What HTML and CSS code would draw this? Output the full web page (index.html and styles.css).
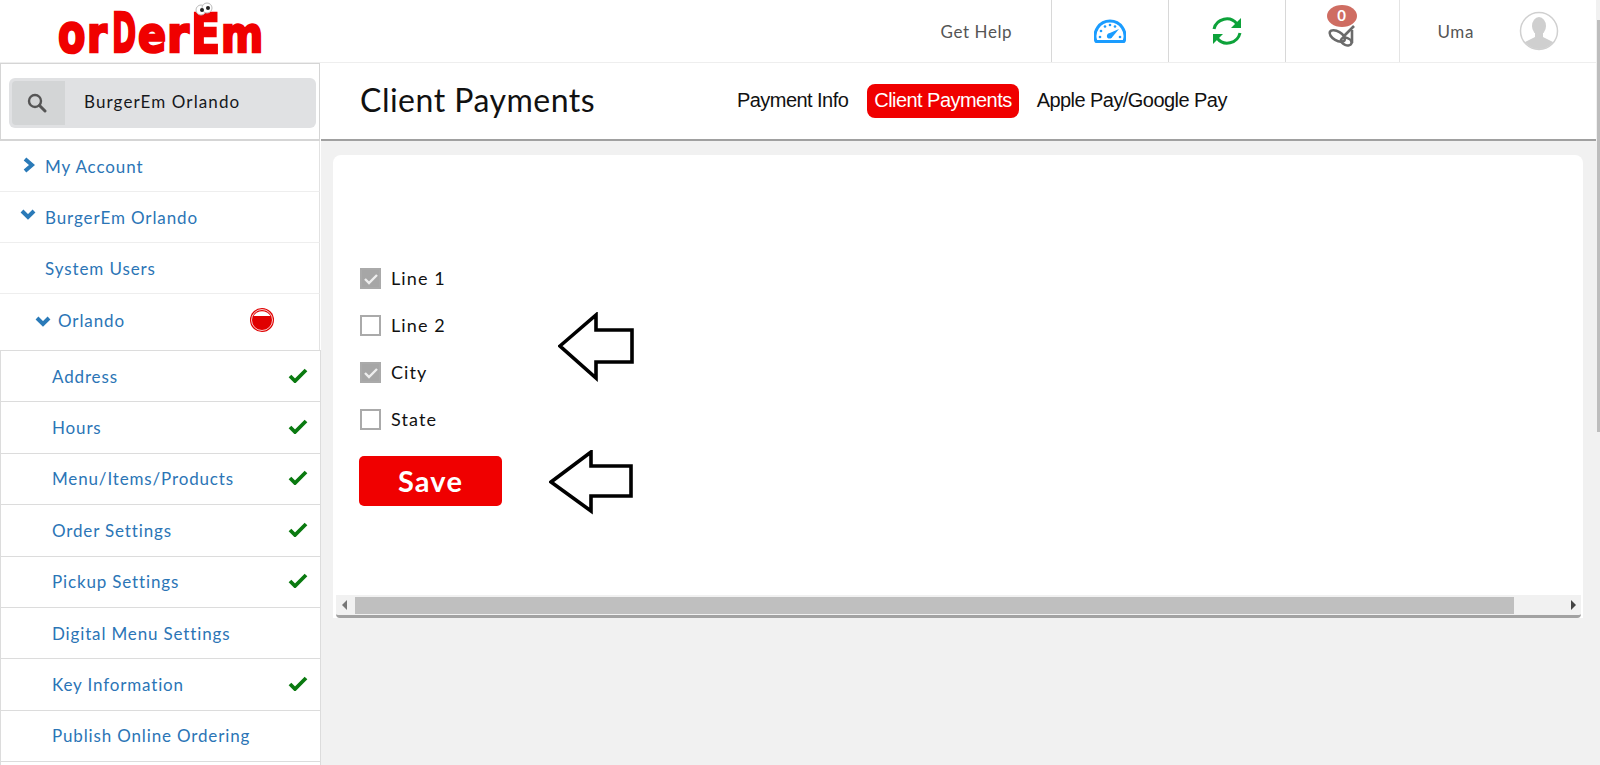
FILE: index.html
```html
<!DOCTYPE html>
<html lang="en">
<head>
    <meta charset="UTF-8">
    <title>Client Payments</title>
    <meta name="viewport" content="width=device-width, initial-scale=1.0">
    <link rel="stylesheet" href="styles.css">
</head>
<body>
    <div class="topbar">
        <div class="logo">
            <svg class="logo-svg" width="240" height="70" viewBox="0 0 240 70">
                <text class="logo-letter" transform="translate(17 52) scale(.74 1)" font-size="54">o</text>
                <text class="logo-letter" transform="translate(46 52) scale(.81 1)" font-size="50">r</text>
                <text class="logo-letter" transform="translate(71 52) scale(.53 1)" font-size="55">D</text>
                <text class="logo-letter" transform="translate(97 52) scale(.83 1)" font-size="50">e</text>
                <text class="logo-letter" transform="translate(126 52) scale(.89 1)" font-size="50">r</text>
                <text class="logo-letter" transform="translate(150 53) scale(.76 1)" font-size="56">E</text>
                <text class="logo-letter" transform="translate(180 52) scale(.81 1)" font-size="50">m</text>
                <circle cx="160" cy="10" r="5" fill="#fff" stroke="#bbb"/>
                <circle cx="166" cy="8" r="5" fill="#fff" stroke="#bbb"/>
                <circle cx="161" cy="10" r="2" fill="#222"/>
                <circle cx="167" cy="8" r="2" fill="#222"/>
            </svg>
        </div>
        <div class="top-right">
            <a class="top-link">Get Help</a>
            <div class="top-cell">
                <svg width="32" height="26" viewBox="0 0 32 26">
                    <path d="M2 23.5 A15 15 0 1 1 30 23.5 Z" fill="none" stroke="#1a9cff" stroke-width="3" stroke-linejoin="round"/>
                    <path d="M13.5 16 L25 11 L17.5 20 Z" fill="#1a9cff"/>
                    <circle cx="15.5" cy="18" r="2.6" fill="#1a9cff"/>
                    <g fill="#1a9cff">
                        <circle cx="6" cy="19" r="1.3"/><circle cx="7" cy="13" r="1.3"/><circle cx="11" cy="8.5" r="1.3"/>
                        <circle cx="16" cy="7" r="1.3"/><circle cx="21" cy="8.5" r="1.3"/><circle cx="26" cy="19" r="1.3"/>
                    </g>
                </svg>
            </div>
            <div class="top-cell">
                <svg width="30" height="32" viewBox="0 0 30 32" fill="none" stroke="#0da23a" stroke-width="3">
                    <path d="M2 14 A13 13 0 0 1 25 9"/>
                    <path d="M29 3 V13 H19 Z" fill="#0da23a" stroke="none"/>
                    <path d="M28 18 A13 13 0 0 1 5 23"/>
                    <path d="M1 29 V19 H11 Z" fill="#0da23a" stroke="none"/>
                </svg>
            </div>
            <div class="top-cell bell-cell">
                <span class="badge">0</span>
                <svg class="bell" width="28" height="22" viewBox="0 0 28 22" fill="none" stroke="#6b6b6b" stroke-width="2.6">
                    <ellipse cx="10.3" cy="11" rx="8.5" ry="4.4" transform="rotate(30 10.3 11)"/>
                    <ellipse cx="19.3" cy="16.5" rx="5.5" ry="3.6" transform="rotate(20 19.3 16.5)"/>
                    <path d="M16 12 L27 1"/>
                    <path d="M25 5 V18"/>
                </svg>
            </div>
            <div class="top-user">
                <span class="top-link">Uma</span>
                <svg width="40" height="40" viewBox="0 0 40 40">
                    <clipPath id="avatarClip"><circle cx="20" cy="20" r="18"/></clipPath>
                    <circle cx="20" cy="20" r="18.5" fill="#fff" stroke="#d0d0d0" stroke-width="1.5"/>
                    <g clip-path="url(#avatarClip)" fill="#cfcfcf">
                        <ellipse cx="20" cy="15" rx="7" ry="9"/>
                        <path d="M16 22 H24 V26 L34 31 V40 H6 V31 L16 26 Z"/>
                    </g>
                </svg>
            </div>
        </div>
    </div>

    <div class="main">
        <aside class="sidebar">
            <div class="search-panel">
                <div class="search-box">
                    <span class="search-icon">
                        <svg width="20" height="20" viewBox="0 0 20 20" fill="none" stroke="#555" stroke-width="2.4">
                            <circle cx="8" cy="8" r="6"/>
                            <path d="M12.5 12.5 L18 18" stroke-linecap="round" stroke-width="3"/>
                        </svg>
                    </span>
                    <span class="search-text">BurgerEm Orlando</span>
                </div>
            </div>
            <div class="menu-row">
                <svg class="chev chev-right" width="12" height="16" viewBox="0 0 12 16"><path d="M2 2 L9 8 L2 14" /></svg>
                My Account
            </div>
            <div class="menu-row">
                <svg class="chev" width="16" height="12" viewBox="0 0 16 12"><path d="M2 2 L8 8 L14 2"/></svg>
                BurgerEm Orlando
            </div>
            <div class="menu-row">System Users</div>
            <div class="menu-row location-row">
                <svg class="chev" width="16" height="12" viewBox="0 0 16 12"><path d="M2 2 L8 8 L14 2"/></svg>
                Orlando
                <svg class="status-dot" width="26" height="26" viewBox="0 0 26 26">
                    <circle cx="13" cy="13" r="12" fill="#e00000"/>
                    <circle cx="13" cy="13" r="10.5" fill="none" stroke="#fff" stroke-width="0.8"/>
                    <path d="M4.5 9 A10 10 0 0 1 21.5 9 Z" fill="#fff"/>
                </svg>
            </div>
            <div class="sub-row">Address <svg class="tick" width="20" height="16" viewBox="0 0 20 16"><path d="M2 9 L7 14 L18 3"/></svg></div>
            <div class="sub-row">Hours <svg class="tick" width="20" height="16" viewBox="0 0 20 16"><path d="M2 9 L7 14 L18 3"/></svg></div>
            <div class="sub-row">Menu/Items/Products <svg class="tick" width="20" height="16" viewBox="0 0 20 16"><path d="M2 9 L7 14 L18 3"/></svg></div>
            <div class="sub-row">Order Settings <svg class="tick" width="20" height="16" viewBox="0 0 20 16"><path d="M2 9 L7 14 L18 3"/></svg></div>
            <div class="sub-row">Pickup Settings <svg class="tick" width="20" height="16" viewBox="0 0 20 16"><path d="M2 9 L7 14 L18 3"/></svg></div>
            <div class="sub-row">Digital Menu Settings</div>
            <div class="sub-row">Key Information <svg class="tick" width="20" height="16" viewBox="0 0 20 16"><path d="M2 9 L7 14 L18 3"/></svg></div>
            <div class="sub-row">Publish Online Ordering</div>
            <div class="sub-row"></div>
        </aside>

        <main class="content">
            <div class="title-bar">
                <h1>Client Payments</h1>
                <nav class="tabs">
                    <a class="tab">Payment Info</a>
                    <a class="tab active">Client Payments</a>
                    <a class="tab">Apple Pay/Google Pay</a>
                </nav>
            </div>
            <div class="card">
                <div class="card-body">
                    <label class="check-row"><span class="box checked"><svg width="16" height="14" viewBox="0 0 16 14"><path d="M2 7 L6 11 L14 3"/></svg></span>Line 1</label>
                    <label class="check-row"><span class="box"></span>Line 2</label>
                    <label class="check-row"><span class="box checked"><svg width="16" height="14" viewBox="0 0 16 14"><path d="M2 7 L6 11 L14 3"/></svg></span>City</label>
                    <label class="check-row"><span class="box"></span>State</label>
                    <button class="save-btn">Save</button>
                    <svg class="arrow arrow-one" width="78" height="70" viewBox="0 0 78 70"><path d="M2 34 L38 3 V18 H74 V50 H38 V66 Z"/></svg>
                    <svg class="arrow arrow-two" width="86" height="66" viewBox="0 0 86 66"><path d="M2 32 L42 2 V16 H82 V46 H42 V61 Z"/></svg>
                </div>
                <div class="h-scroll">
                    <span class="scroll-arrow arrow-left"></span>
                    <span class="scroll-thumb"></span>
                    <span class="scroll-arrow arrow-right"></span>
                </div>
            </div>
        </main>
    </div>
    <div class="page-scroll"><span></span></div>
</body>
</html>
```

FILE: styles.css
```css
* { box-sizing: border-box; }
html, body { height: 100%; }
body { position: relative; margin: 0; height: 765px; overflow: hidden; background: #f1f1f1; font-family: 'Lato', Arial, sans-serif; color: #111; }

.topbar { display: flex; justify-content: space-between; height: 63px; background: #fff; border-bottom: 1px solid #eee; }
.logo { padding-left: 41px; }
.logo-svg { display: block; overflow: visible; }
.logo-letter { font-family: 'DejaVu Sans', Arial, sans-serif; font-weight: 700; fill: #f00000; stroke: #f00000; stroke-width: 2.6; }
.top-right { display: flex; align-items: stretch; padding-right: 41px; }
.top-link { color: #555; font-size: 17px; letter-spacing: 0.6px; }
.top-right > .top-link { display: flex; align-items: center; width: 112px; padding-left: 2px; }
.top-cell { display: flex; align-items: center; justify-content: center; width: 117px; border-left: 1px solid #d8d8d8; }
.bell-cell { position: relative; width: 114px; }
.bell { margin: 9px 0 0 -2px; }
.badge { position: absolute; left: 41px; top: 5px; width: 30px; height: 22px; border-radius: 50%; background: #cf6d62; color: #fff; font-size: 15px; font-weight: 700; text-align: center; line-height: 21px; }
.top-user { display: flex; align-items: center; gap: 45px; padding-left: 38px; border-left: 1px solid #e4e4e4; }

.main { display: flex; height: 702px; padding-right: 4px; }
.sidebar { flex: 0 0 321px; overflow: hidden; background: #fff; }
.search-panel { height: 78px; padding: 14px 3px 0 8px; border: 1px solid #d5d5d5; border-width: 1px 1px 2px 1px; width: 320px; }
.search-box { display: flex; align-items: center; height: 50px; padding: 3px; background: #e0e1e3; border-radius: 6px; }
.search-icon { display: flex; align-items: center; padding-left: 15px; width: 53px; height: 44px; background: #d3d5d6; border-radius: 4px 0 0 4px; }
.search-text { margin: -3px 0 0 19px; font-size: 17px; letter-spacing: 1.1px; color: #16181c; }

.menu-row { position: relative; display: flex; align-items: center; width: 320px; height: 51px; padding: 1px 0 0 45px; background: #fff; color: #2b75b6; font-size: 17px; letter-spacing: 0.9px; border-right: 1px solid #e2e2e2; border-bottom: 1px solid #eee; }
.chev { position: absolute; left: 20px; top: 17px; fill: none; stroke: #2a7ab8; stroke-width: 4; }
.chev-right { left: 23px; top: 16px; }
.location-row { height: 56px; padding: 0 0 4px 58px; border-bottom: 0; }
.location-row .chev { left: 35px; top: 22px; }
.status-dot { position: absolute; left: 249px; top: 13px; }

.sub-row { position: relative; display: flex; align-items: center; justify-content: space-between; width: 321px; height: 51.4px; padding: 0 12px 0 51px; background: #fff; color: #2b75b6; font-size: 17px; letter-spacing: 0.85px; border: 1px solid #dcdcdc; border-width: 1px 1px 0 1px; }
.tick { margin-top: -3px; fill: none; stroke: #0a7a10; stroke-width: 3.8; }

.content { flex: 1; min-width: 0; }
.title-bar { display: flex; align-items: center; height: 78px; background: #fff; border-bottom: 2px solid #a0a0a0; padding-left: 39px; }
h1 { margin: -4px 0 0; width: 370px; font-size: 32px; font-weight: 400; letter-spacing: 0.5px; color: #111; }
.tabs { display: flex; align-items: center; margin-top: -1px; }
.tab { padding: 0 7px; height: 34px; line-height: 32px; font-family: 'Liberation Sans', Arial, sans-serif; font-size: 20px; letter-spacing: -0.55px; color: #111; border-radius: 8px; }
.tab.active { background: #f00000; color: #fff; margin: 0 11px 0 12px; }

.card { margin: 14px 13px 0 12px; background: #fff; border-radius: 8px 8px 0 0; }
.card-body { position: relative; height: 440px; padding: 113px 0 0 27px; }
.check-row { display: flex; align-items: flex-start; gap: 10px; height: 21px; margin-bottom: 26px; font-size: 18px; line-height: 21px; letter-spacing: 1.1px; color: #111; }
.box { display: flex; align-items: center; justify-content: center; width: 21px; height: 21px; border: 2px solid #aaa; background: #fff; }
.box.checked { background: #a6a6a6; }
.box svg { fill: none; stroke: #eee; stroke-width: 2.4; }
.save-btn { display: block; width: 143px; height: 50px; margin: 0 0 0 -1px; padding: 0 0 2px; border: 0; border-radius: 5px; background: #f00000; color: #fff; font-family: 'Lato', Arial, sans-serif; font-size: 29px; font-weight: 700; letter-spacing: 1.2px; }
.arrow { position: absolute; fill: none; stroke: #000; stroke-width: 3.6; }
.arrow-one { left: 225px; top: 157px; }
.arrow-two { left: 216px; top: 295px; }

.h-scroll { position: relative; display: flex; align-items: center; height: 23px; padding-left: 19px; background: #f1f1f1; border-bottom: 3px solid #a2a2a2; margin: 0 2px 0 3px; border-radius: 0 0 4px 4px; }
.scroll-thumb { width: 1159px; height: 17px; background: #bfbfbf; }
.scroll-arrow { position: absolute; top: 5px; border: 5px solid transparent; }
.arrow-left { left: 1px; border-right-color: #777; }
.arrow-right { right: 0; border-left-color: #444; }

.page-scroll { position: absolute; top: 0; right: 0; width: 4px; height: 765px; padding-top: 20px; background: #f1f1f1; }
.page-scroll span { display: block; margin-left: 1px; height: 412px; background: #bdbdbd; }
```
